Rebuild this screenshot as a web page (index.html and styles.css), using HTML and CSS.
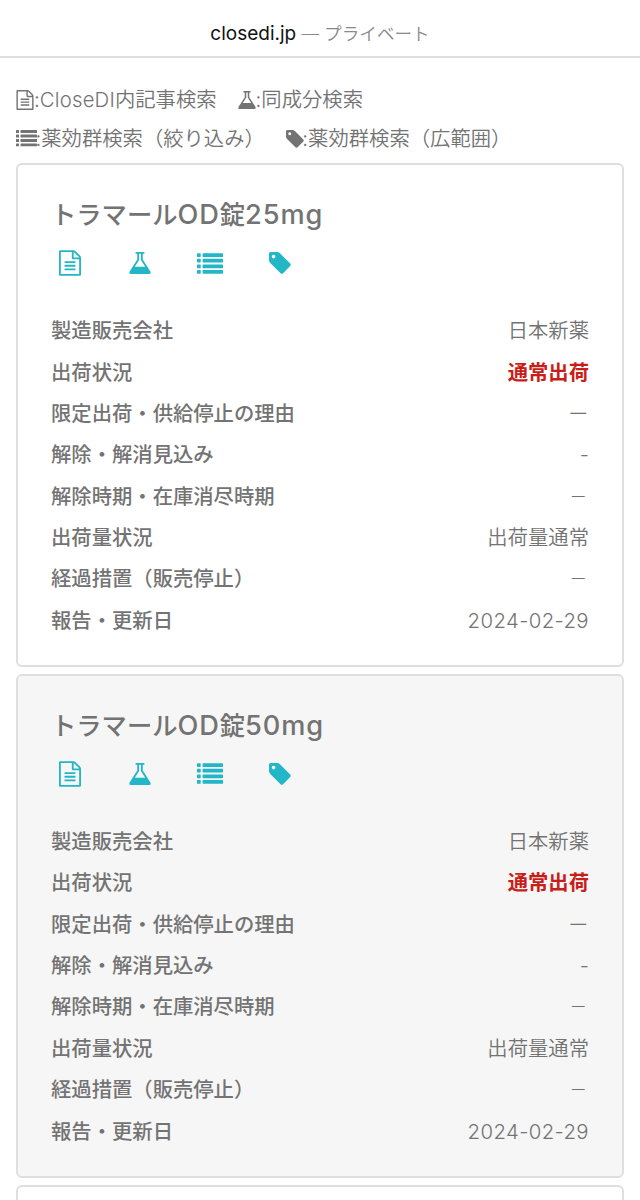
FILE: index.html
```html
<!DOCTYPE html>
<html lang="ja">
<head>
<meta charset="utf-8">
<title>closedi.jp</title>
<link rel="stylesheet" href="styles.css">
</head>
<body>
<svg class="sprite" aria-hidden="true">
  <symbol id="file" viewBox="0 0 24 28"><path fill-rule="evenodd" d="M22.9 5.9C23.5 6.5 24 7.7 24 8.5V26.5C24 27.3 23.3 28 22.5 28H1.5C.7 28 0 27.3 0 26.5V1.5C0 .7.7 0 1.5 0H15.5C16.3 0 17.5.5 18.1 1.1ZM16 2.1V8H21.9C21.8 7.7 21.6 7.4 21.5 7.3L16.7 2.5C16.6 2.4 16.3 2.2 16 2.1ZM22 26V10H15.5C14.7 10 14 9.3 14 8.5V2H2V26ZM6 12.5C6 12.2 6.2 12 6.5 12H17.5C17.8 12 18 12.2 18 12.5V13.5C18 13.8 17.8 14 17.5 14H6.5C6.2 14 6 13.8 6 13.5ZM17.5 16C17.8 16 18 16.2 18 16.5V17.5C18 17.8 17.8 18 17.5 18H6.5C6.2 18 6 17.8 6 17.5V16.5C6 16.2 6.2 16 6.5 16ZM17.5 20C17.8 20 18 20.2 18 20.5V21.5C18 21.8 17.8 22 17.5 22H6.5C6.2 22 6 21.8 6 21.5V20.5C6 20.2 6.2 20 6.5 20Z"/></symbol>
  <symbol id="flask" viewBox="0 0 24 24"><path fill-rule="evenodd" d="M8 0H16Q17 0 17 1T16 2H15V8.2L23.2 21.1Q24.4 24 22 24H2Q-.4 24 .8 21.1L9 8.2V2H8Q7 2 7 1T8 0ZM11 2V8.8L6.4 16H17.6L13 8.8V2Z"/></symbol>
  <symbol id="list" viewBox="0 0 28 22"><path d="M.5 0H3.5Q4 0 4 .5V3.5Q4 4 3.5 4H.5Q0 4 0 3.5V.5Q0 0 .5 0ZM.5 6H3.5Q4 6 4 6.5V9.5Q4 10 3.5 10H.5Q0 10 0 9.5V6.5Q0 6 .5 6ZM.5 12H3.5Q4 12 4 12.5V15.5Q4 16 3.5 16H.5Q0 16 0 15.5V12.5Q0 12 .5 12ZM.5 18H3.5Q4 18 4 18.5V21.5Q4 22 3.5 22H.5Q0 22 0 21.5V18.5Q0 18 .5 18ZM6.5 0H27.5Q28 0 28 .5V3.5Q28 4 27.5 4H6.5Q6 4 6 3.5V.5Q6 0 6.5 0ZM6.5 6H27.5Q28 6 28 6.5V9.5Q28 10 27.5 10H6.5Q6 10 6 9.5V6.5Q6 6 6.5 6ZM6.5 12H27.5Q28 12 28 12.5V15.5Q28 16 27.5 16H6.5Q6 16 6 15.5V12.5Q6 12 6.5 12ZM6.5 18H27.5Q28 18 28 18.5V21.5Q28 22 27.5 22H6.5Q6 22 6 21.5V18.5Q6 18 6.5 18Z"/></symbol>
  <symbol id="tag" viewBox="0 0 24 24"><path fill-rule="evenodd" d="M2 0H8.5C9.6 0 11.1.6 11.9 1.4L23.1 12.6C23.9 13.4 23.9 14.6 23.1 15.4L15.4 23.1C14.6 23.9 13.4 23.9 12.6 23.1L1.4 11.9C.6 11.1 0 9.6 0 8.5V2C0 .9.9 0 2 0ZM5 3A2 2 0 1 0 5 7A2 2 0 1 0 5 3Z"/></symbol>
</svg>
<header class="browser-bar"><span class="host">closedi.jp</span> <span class="mode"><span class="dash">—</span> プライベート</span></header>
<main class="page">
  <div class="legend">
    <div class="legend-row">
      <span class="legend-item"><svg class="lg-file"><use href="#file"/></svg><span>:<span class="brand">CloseDI</span>内記事検索</span></span>
      <span class="legend-item second"><svg class="lg-flask"><use href="#flask"/></svg><span>:同成分検索</span></span>
    </div>
    <div class="legend-row lower">
      <span class="legend-item"><svg class="lg-list"><use href="#list"/></svg><span>:薬効群検索（絞り込み）</span></span>
      <span class="legend-item third"><svg class="lg-tag"><use href="#tag"/></svg><span>:薬効群検索（広範囲）</span></span>
    </div>
  </div>
  <section class="card">
    <h2 class="title">トラマール<span class="latin">OD</span>錠<span class="latin">25mg</span></h2>
    <nav class="actions">
      <a class="action"><svg class="ic-file"><use href="#file"/></svg></a>
      <a class="action"><svg class="ic-flask"><use href="#flask"/></svg></a>
      <a class="action"><svg class="ic-list"><use href="#list"/></svg></a>
      <a class="action"><svg class="ic-tag"><use href="#tag"/></svg></a>
    </nav>
    <dl class="facts">
      <div class="fact"><dt>製造販売会社</dt><dd>日本新薬</dd></div>
      <div class="fact"><dt>出荷状況</dt><dd class="status">通常出荷</dd></div>
      <div class="fact"><dt>限定出荷・供給停止の理由</dt><dd class="bar">－</dd></div>
      <div class="fact"><dt>解除・解消見込み</dt><dd>-</dd></div>
      <div class="fact"><dt>解除時期・在庫消尽時期</dt><dd class="minus">－</dd></div>
      <div class="fact"><dt>出荷量状況</dt><dd>出荷量通常</dd></div>
      <div class="fact"><dt>経過措置（販売停止）</dt><dd class="minus">－</dd></div>
      <div class="fact"><dt>報告・更新日</dt><dd class="date">2024-02-29</dd></div>
    </dl>
  </section>
  <section class="card shaded">
    <h2 class="title">トラマール<span class="latin">OD</span>錠<span class="latin">50mg</span></h2>
    <nav class="actions">
      <a class="action"><svg class="ic-file"><use href="#file"/></svg></a>
      <a class="action"><svg class="ic-flask"><use href="#flask"/></svg></a>
      <a class="action"><svg class="ic-list"><use href="#list"/></svg></a>
      <a class="action"><svg class="ic-tag"><use href="#tag"/></svg></a>
    </nav>
    <dl class="facts">
      <div class="fact"><dt>製造販売会社</dt><dd>日本新薬</dd></div>
      <div class="fact"><dt>出荷状況</dt><dd class="status">通常出荷</dd></div>
      <div class="fact"><dt>限定出荷・供給停止の理由</dt><dd class="bar">－</dd></div>
      <div class="fact"><dt>解除・解消見込み</dt><dd>-</dd></div>
      <div class="fact"><dt>解除時期・在庫消尽時期</dt><dd class="minus">－</dd></div>
      <div class="fact"><dt>出荷量状況</dt><dd>出荷量通常</dd></div>
      <div class="fact"><dt>経過措置（販売停止）</dt><dd class="minus">－</dd></div>
      <div class="fact"><dt>報告・更新日</dt><dd class="date">2024-02-29</dd></div>
    </dl>
  </section>
  <section class="card last"></section>
</main>
</body>
</html>
```
FILE: styles.css
```css
* { box-sizing: border-box; }
body {
  margin: 0;
  background: #fff;
  color: #737373;
  font-family: Inter, "Noto Sans CJK JP", sans-serif;
  font-size: 20.33px;
  font-weight: 350;
}
svg { display: block; fill: currentColor; flex: none; }
.sprite { display: none; }
.browser-bar {
  height: 58px;
  padding-top: 10px;
  border-bottom: 2px solid #dedede;
  text-align: center;
  line-height: 48px;
  font-size: 19px;
}
.host { color: #111; font-weight: 400; font-size: 19px; }
.mode { color: #8a8a8a; font-size: 17.6px; }
.page { height: 1142px; overflow: hidden; padding: 23px 16px 0; }
.legend { height: 82px; }
.legend-row { display: flex; height: 38px; line-height: 38px; white-space: nowrap; }
.legend-item { display: flex; align-items: center; }
.brand { letter-spacing: .2px; }
.second { margin-left: 21px; }
.lower { height: 39px; line-height: 39px; }
.lower .legend-item > span { margin-left: -1.5px; }
.third { margin-left: 21px; }
.lg-file { width: 18px; height: 20px; }
.lg-flask { width: 18px; height: 18px; }
.lg-list { width: 21px; height: 16.5px; }
.lg-tag { width: 18px; height: 18px; }
.card {
  height: 504px;
  margin-bottom: 6.8px;
  padding: 30px 33px 0;
  border: 2px solid #dfdfdf;
  border-radius: 6px;
  background: #fff;
}
.last { height: 15px; margin-bottom: 0; padding: 0; border-bottom: 0; border-radius: 6px 6px 0 0; }
.shaded { background: #f6f6f6; }
.title { margin: 0; height: 40px; line-height: 40px; font-size: 25.3px; font-weight: 500; }
.latin { font-size: 27.2px; letter-spacing: .9px; }
.actions { display: flex; height: 56px; margin-left: -16.5px; }
.action { width: 70.2px; height: 56px; display: flex; justify-content: center; align-items: center; color: #23b6c7; }
.ic-file { width: 22px; height: 26px; }
.ic-flask { width: 22px; height: 22px; }
.ic-list { width: 26px; height: 21px; }
.ic-tag { width: 22px; height: 22px; }
.facts { margin: 19.3px 0 0; }
.fact { display: flex; justify-content: space-between; height: 41.35px; line-height: 41.4px; }
dt { font-weight: 500; }
dd { margin: 0; }
.status { color: #c81e1a; font-weight: 700; }
.bar { font-size: 21.5px; }
.minus { padding-right: 2px; font-size: 17.5px; }
.date { letter-spacing: .4px; }
```
